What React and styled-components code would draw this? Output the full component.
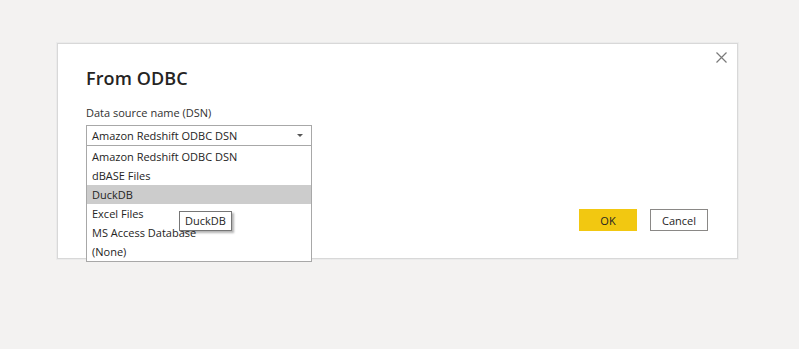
import React from 'react';
import styled, { createGlobalStyle } from 'styled-components';

const GlobalStyle = createGlobalStyle`
  html, body {
    margin: 0;
    padding: 0;
    background: #f3f2f1;
    font-family: 'Open Sans', 'Noto Sans', sans-serif;
    color: #252423;
  }
  * {
    box-sizing: border-box;
  }
`;

const options = [
  'Amazon Redshift ODBC DSN',
  'dBASE Files',
  'DuckDB',
  'Excel Files',
  'MS Access Database',
  '(None)',
];

const App = () => {
  return (
    <Page>
      <GlobalStyle />
      <Dialog>
        <Header>
          <Title>From ODBC</Title>
          <CloseButton aria-label="Close">
            <svg width="11" height="11" viewBox="0 0 11 11">
              <path d="M0.5 0.5 L10.5 10.5 M10.5 0.5 L0.5 10.5" stroke="#7a7a7a" strokeWidth="1.2" />
            </svg>
          </CloseButton>
        </Header>
        <Label>Data source name (DSN)</Label>
        <SelectWrap>
          <Select>
            <span>Amazon Redshift ODBC DSN</span>
            <Arrow />
          </Select>
          <List>
            {options.map((o) => (
              <Item key={o} active={o === 'DuckDB'}>
                {o}
              </Item>
            ))}
            <Tooltip>DuckDB</Tooltip>
          </List>
        </SelectWrap>
        <Footer>
          <Button primary>OK</Button>
          <Button>Cancel</Button>
        </Footer>
      </Dialog>
    </Page>
  );
};

const Page = styled.div`
  width: 799px;
  height: 349px;
  padding: 43px 0 0 57px;
  overflow: hidden;
`;

const Dialog = styled.div`
  width: 681px;
  height: 216px;
  padding: 8px 10px 27px 28px;
  background: #ffffff;
  border: 1px solid #d8d8d8;
  box-shadow: 0 0 0 1px #ebebeb;
`;

const Header = styled.div`
  display: flex;
  justify-content: space-between;
  align-items: flex-start;
  height: 40px;
`;

const Title = styled.h1`
  margin: 12px 0 0 0;
  font-size: 18px;
  line-height: 28px;
  font-weight: 600;
  letter-spacing: 0.1px;
`;

const CloseButton = styled.button`
  display: flex;
  width: 11px;
  height: 11px;
  padding: 0;
  border: none;
  background: none;
`;

const Label = styled.div`
  margin-top: 13px;
  font-size: 11px;
  line-height: 16px;
  color: #323130;
`;

const SelectWrap = styled.div`
  position: relative;
  width: 226px;
  margin-top: 4px;
`;

const Select = styled.div`
  display: flex;
  align-items: center;
  justify-content: space-between;
  height: 21px;
  padding: 0 8px 0 5px;
  border: 1px solid #a8a8a8;
  font-size: 11px;
  color: #252423;
`;

const Arrow = styled.span`
  width: 0;
  height: 0;
  border-left: 3px solid transparent;
  border-right: 3px solid transparent;
  border-top: 3px solid #555;
`;

const List = styled.div`
  position: absolute;
  top: 100%;
  left: 0;
  width: 226px;
  padding-top: 1px;
  background: #ffffff;
  border: 1px solid #a8a8a8;
  border-top: none;
  z-index: 2;
`;

const Item = styled.div`
  height: 19px;
  padding-left: 5px;
  font-size: 11px;
  line-height: 19px;
  color: #252423;
  background: ${(p) => (p.active ? '#cccccc' : '#ffffff')};
`;

const Tooltip = styled.div`
  position: absolute;
  left: 92px;
  top: 65px;
  height: 20px;
  padding: 0 5px;
  font-size: 11px;
  line-height: 18px;
  background: #ffffff;
  border: 1px solid #767676;
  box-shadow: 2px 2px 2px rgba(0, 0, 0, 0.3);
`;

const Footer = styled.div`
  display: flex;
  justify-content: flex-end;
  gap: 13px;
  margin-top: 63px;
  padding-right: 19px;
`;

const Button = styled.button`
  width: 58px;
  height: 22px;
  padding: 0;
  font-family: inherit;
  font-size: 11px;
  color: #252423;
  background: ${(p) => (p.primary ? '#f2c811' : '#ffffff')};
  border: 1px solid ${(p) => (p.primary ? '#f2c811' : '#8a8886')};
`;

export default App;
